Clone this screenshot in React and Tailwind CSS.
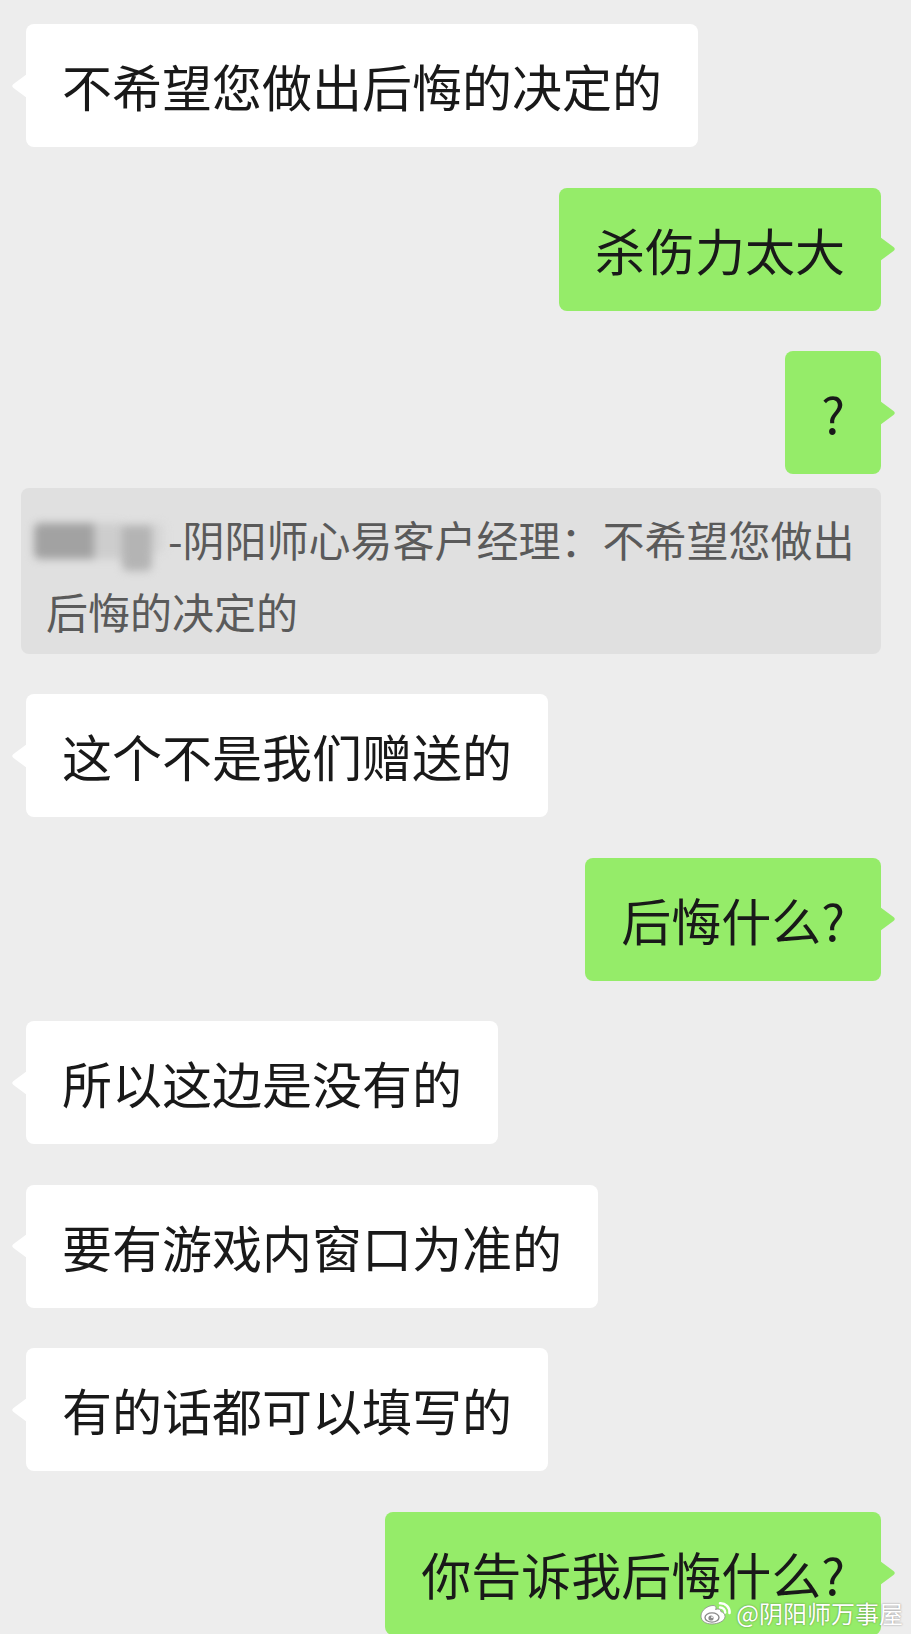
const FONT = "font-['Noto_Sans_CJK_SC','Noto_Sans',sans-serif]";

const messages = [
  { side: 'left', text: '不希望您做出后悔的决定的' },
  { side: 'right', text: '杀伤力太大' },
  { side: 'right', text: '?' },
  { type: 'quote' },
  { side: 'left', text: '这个不是我们赠送的' },
  { side: 'right', text: '后悔什么?' },
  { side: 'left', text: '所以这边是没有的' },
  { side: 'left', text: '要有游戏内窗口为准的' },
  { side: 'left', text: '有的话都可以填写的' },
  { side: 'right', text: '你告诉我后悔什么?' },
];

// little pointer on the bubble edge
const Tail = ({ side, color }) => (
  <svg
    width="16"
    height="24"
    viewBox="0 0 16 24"
    className={
      side === 'left'
        ? 'absolute left-[-15px] top-1/2 -translate-y-1/2'
        : 'absolute right-[-15px] top-1/2 -translate-y-1/2 -scale-x-100'
    }
  >
    <path d="M16 0 L2.5 10 Q0 12 2.5 14 L16 24 Z" fill={color} />
  </svg>
);

const Bubble = ({ side, text }) => {
  const isRight = side === 'right';
  const color = isRight ? '#95ec69' : '#ffffff';
  return (
    <div
      className={`relative rounded-[8px] px-[36px] py-[36px] text-[50px] leading-[51px] text-[#191919] whitespace-nowrap ${
        isRight ? 'self-end bg-[#95ec69]' : 'self-start bg-white'
      }`}
    >
      <Tail side={side} color={color} />
      {text}
    </div>
  );
};

// blurred sender name
const Smudge = () => (
  <span className="-ml-[12px] mr-[4px] inline-flex h-[52px] items-start align-middle blur-[4px]">
    <span className="mt-[4px] h-[36px] w-[60px] rounded-l-[6px] bg-[#a2a2a2]" />
    <span className="mt-[4px] h-[36px] w-[28px] bg-[#cdcdcd]" />
    <span className="mt-[6px] h-[46px] w-[30px] rounded-b-[6px] bg-[#b4b4b4]" />
    <span className="mt-[4px] h-[30px] w-[12px] rounded-r-[6px] bg-[#d6d6d6]" />
  </span>
);

const Quote = () => (
  <div className="-mt-[27px] -ml-[5px] self-stretch rounded-[8px] bg-[#e0e0e0] pl-[25px] pr-[10px] pt-[15px] pb-[7px] text-[42px] leading-[72px] text-[#5a5a5a]">
    <span className="whitespace-nowrap">
      <Smudge />
      -阴阳师心易客户经理：不希望您做出
    </span>
    <br />
    后悔的决定的
  </div>
);

const WeiboLogo = () => (
  <svg width="34" height="24" viewBox="0 0 34 24">
    <g stroke="#8a8a8a" strokeWidth="0.8">
      <path
        d="M3 15 C3 9 10 4.5 15 4.5 C18 4.5 18.5 6.5 17.5 8.5 C20.5 7.5 23 8 22.8 10.5 C25.5 11.5 27 13 27 15.5 C27 20 20 23 14 23 C7.5 23 3 20 3 15 Z"
        fill="#ffffff"
      />
      <ellipse cx="14" cy="16.5" rx="7" ry="4.6" fill="none" strokeWidth="1.4" />
      <circle cx="13" cy="17" r="2.6" fill="#8a8a8a" stroke="none" />
      <circle cx="14" cy="16.2" r="0.9" fill="#ffffff" stroke="none" />
    </g>
    <path d="M22 2.2 A9 9 0 0 1 31.5 12" fill="none" stroke="#ffffff" strokeWidth="2.6" strokeLinecap="round" />
    <path d="M22 6.5 A5 5 0 0 1 27.2 11.5" fill="none" stroke="#ffffff" strokeWidth="2.4" strokeLinecap="round" />
  </svg>
);

export default function App() {
  return (
    <div className={`relative h-[1634px] w-[911px] overflow-hidden bg-[#ededed] ${FONT}`}>
      <div className="flex flex-col gap-[40.5px] pl-[26px] pr-[30px] pt-[24px]">
        {messages.map((m, i) =>
          m.type === 'quote' ? <Quote key={i} /> : <Bubble key={i} side={m.side} text={m.text} />
        )}
      </div>

      {/* watermark over the last bubble */}
      <div className="absolute bottom-[9px] right-[8px] flex items-center gap-[4px] text-[24px] leading-none text-white [text-shadow:0_0_2px_rgba(0,0,0,0.45)]">
        <WeiboLogo />
        <span>@阴阳师万事屋</span>
      </div>
    </div>
  );
}
